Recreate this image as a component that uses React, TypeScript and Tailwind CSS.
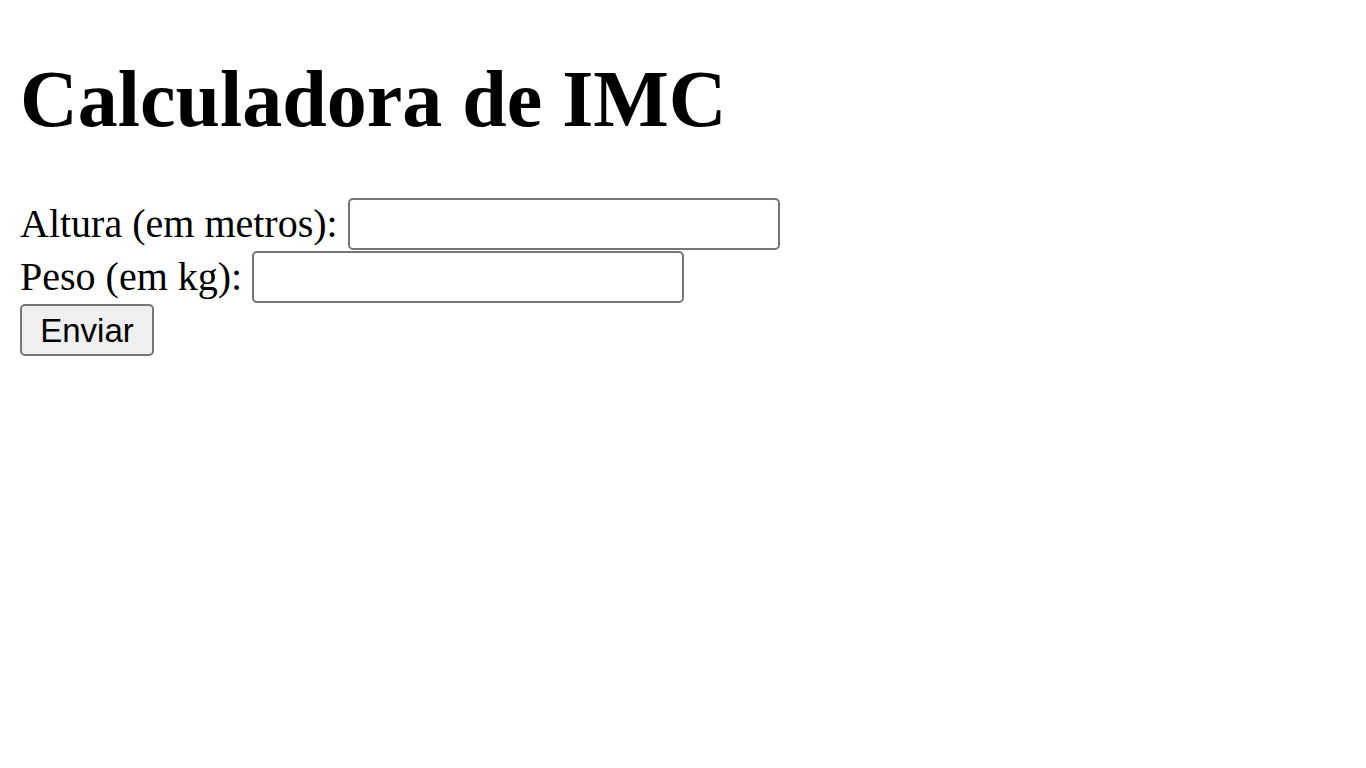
export default function App() {
  return (
    <div className="bg-white min-h-[768px] px-[20px] pt-px text-black" style={{ fontFamily: '"Liberation Serif", "Times New Roman", serif' }}>
      <h1 className="mt-[52px] mb-[53px] text-[80px] leading-[92px] font-bold">Calculadora de IMC</h1>
      <form className="flex flex-col" onSubmit={(e) => e.preventDefault()}>
        <div className="flex items-start h-[53px]">
          <label className="text-[40px] leading-[51px]">Altura (em metros):</label>
          <input type="text" className="ml-[10px] w-[432px] h-[52px] border-2 border-[#767676] rounded-[5px] bg-white" />
        </div>
        <div className="flex items-start h-[53px]">
          <label className="text-[40px] leading-[51px]">Peso (em kg):</label>
          <input type="text" className="ml-[10px] w-[432px] h-[52px] border-2 border-[#767676] rounded-[5px] bg-white" />
        </div>
        <div className="flex">
          <button
            type="submit"
            className="w-[134px] h-[52px] bg-[#efefef] border-2 border-[#767676] rounded-[5px] text-[33px] leading-none text-black"
            style={{ fontFamily: '"Liberation Sans", Arial, sans-serif' }}
          >
            Enviar
          </button>
        </div>
      </form>
    </div>
  );
}
